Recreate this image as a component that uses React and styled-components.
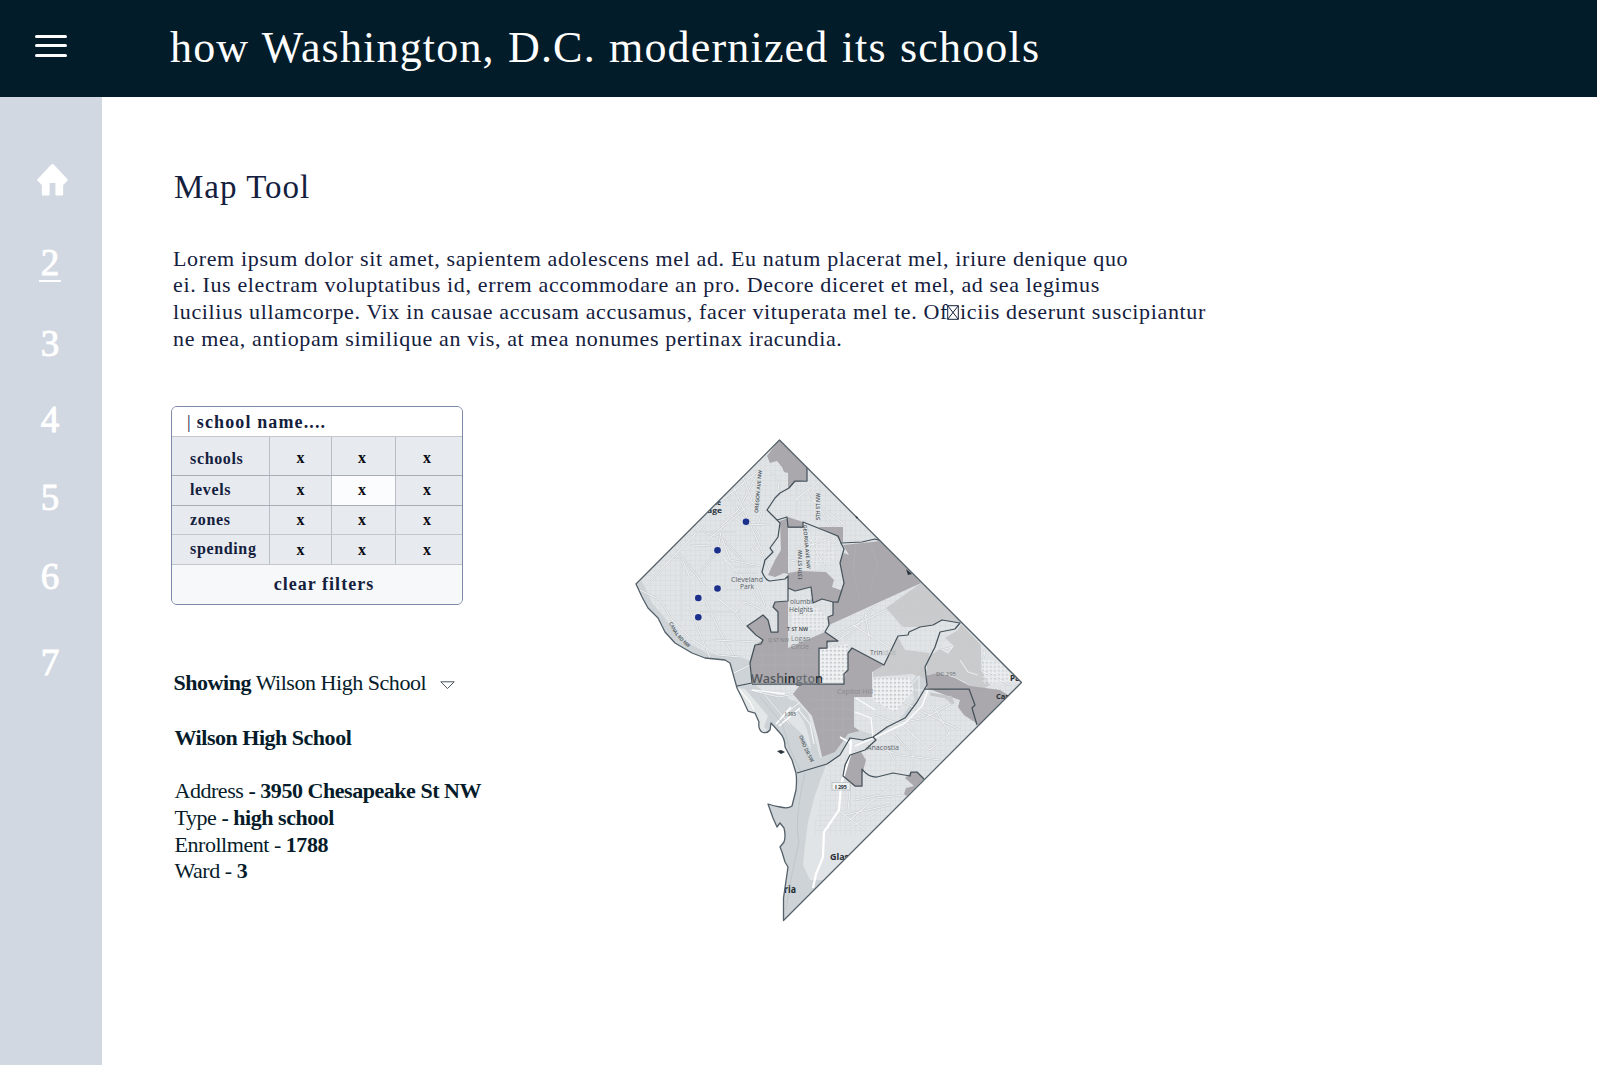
import React from 'react';
import styled, { createGlobalStyle } from 'styled-components';

const GlobalStyle = createGlobalStyle`
  *, *::before, *::after { box-sizing: border-box; }
  body { margin: 0; background: #fff; font-family: "Liberation Serif", "Times New Roman", serif; }
`;

const Page = styled.div`
  display: flex;
  flex-direction: column;
  height: 1065px;
  overflow: hidden;
`;

const Header = styled.header`
  display: flex;
  height: 97px;
  flex: none;
  background: #031c29;
  color: #fff;
`;

const MenuButton = styled.button`
  display: flex;
  flex-direction: column;
  gap: 6.4px;
  width: 135px;
  padding: 35px 0 0 35px;
  border: 0;
  background: none;
`;

const MenuBar = styled.span`
  width: 32px;
  height: 3px;
  border-radius: 2px;
  background: #fff;
`;

const SiteTitle = styled.h1`
  margin: 0 0 0 35px;
  font-size: 44px;
  font-weight: 400;
  line-height: 95px;
  letter-spacing: 1.18px;
  word-spacing: 1px;
  white-space: nowrap;
`;

const Body = styled.div`
  display: flex;
  flex: 1;
`;

const Sidebar = styled.nav`
  display: flex;
  flex-direction: column;
  align-items: center;
  width: 102px;
  flex: none;
  padding: 67px 2px 0 0;
  background: #d1d8e2;
`;

const HomeIcon = styled.svg`
  width: 31px;
  height: 32px;
  margin-left: 5px;
  flex: none;
`;

const NavItem = styled.a`
  height: 38px;
  margin-top: ${(p) => p.$gap}px;
  color: #fff;
  font-size: 37px;
  line-height: 38px;
  -webkit-text-stroke: 0.9px #fff;
  border-bottom: ${(p) => (p.$active ? '2px solid #fff' : '0')};
  padding: 0 1.5px;
`;

const Main = styled.main`
  display: flex;
  flex-direction: column;
  flex: 1;
  padding: 70px 0 0 69px;
`;

const Heading = styled.h2`
  margin: 0 0 0 3px;
  color: #14203d;
  font-size: 33px;
  font-weight: 400;
  line-height: 40px;
  letter-spacing: 1px;
`;

const Intro = styled.p`
  margin: 38.5px 0 0 2px;
  color: #14203d;
  font-size: 22px;
  line-height: 26.75px;
  letter-spacing: 0.645px;
  white-space: nowrap;
`;

const Line = styled.span`
  display: block;
`;

const MissingGlyph = styled.svg`
  width: 12px;
  height: 15px;
  margin-left: -1px;
  margin-right: 1px;
  vertical-align: -1px;
`;

const Columns = styled.div`
  display: flex;
  align-items: flex-start;
  margin-top: 53.2px;
`;

const Controls = styled.section`
  width: 459px;
  flex: none;
`;

const FilterCard = styled.div`
  width: 292px;
  height: 199px;
  border: 1.4px solid #7c89a8;
  border-radius: 6px;
  overflow: hidden;
  color: #14203d;
  font-weight: 700;
  background: #e7eaef;
`;

const SearchField = styled.div`
  height: 30px;
  padding-left: 15px;
  border-bottom: 1px solid #c3c7cd;
  background: #fff;
  font-size: 18px;
  line-height: 30px;
  letter-spacing: 1.12px;
`;

const Caret = styled.span`
  font-weight: 400;
  margin-right: -0.5px;
`;

const FilterRow = styled.div`
  display: grid;
  grid-template-columns: 97px 62px 64px 1fr;
  height: ${(p) => p.$height}px;
  border-bottom: 1px solid ${(p) => (p.$strong ? '#a9adb5' : '#c3c7cd')};
`;

const FilterLabel = styled.div`
  padding: ${(p) => p.$top}px 0 0 18px;
  font-size: 16px;
  line-height: 20px;
  letter-spacing: 0.65px;
`;

const FilterCell = styled.div`
  padding: ${(p) => p.$top}px ${(p) => p.$right}px 0 0;
  border-left: 1px solid #b9bdc5;
  background: ${(p) => (p.$selected ? '#fbfcfe' : 'transparent')};
  color: #0a0c12;
  font-size: 16px;
  line-height: 20px;
  text-align: center;
`;

const ClearButton = styled.button`
  display: block;
  width: 100%;
  height: 39px;
  padding: 0 0 0 14px;
  border: 0;
  background: #f6f8fa;
  color: inherit;
  font: inherit;
  font-size: 18px;
  letter-spacing: 1.03px;
`;

const Details = styled.div`
  margin: 65.5px 0 0 3.5px;
  color: #061c2a;
  font-size: 22px;
  line-height: 26.6px;
  letter-spacing: -0.46px;
  white-space: nowrap;
`;

const Showing = styled.div`
  display: flex;
  align-items: center;
  gap: 14px;
  margin-left: -1px;
`;

const Triangle = styled.svg`
  width: 15px;
  height: 9px;
  margin-top: 4px;
`;

const SchoolName = styled.h3`
  margin: 28px 0 27px;
  font-size: inherit;
  letter-spacing: -0.48px;
`;

const Fact = styled.div``;

const MapSvg = styled.svg`
  width: 400px;
  height: 490px;
  margin-top: 29px;
  font-family: "Open Sans", "Noto Sans", sans-serif;
`;

const NAV = [
  { label: '2', gap: 48, active: true },
  { label: '3', gap: 43 },
  { label: '4', gap: 38 },
  { label: '5', gap: 39.5 },
  { label: '6', gap: 41 },
  { label: '7', gap: 48 },
];

const FILTERS = [
  { label: 'schools', height: 39, labelTop: 12, top: 11, strong: true },
  { label: 'levels', height: 30, labelTop: 4, top: 4, strong: true, selected: 1 },
  { label: 'zones', height: 29, labelTop: 4, top: 4 },
  { label: 'spending', height: 30, labelTop: 4, top: 5 },
];

const OUTLINE =
  'M779.5 440L1021.5 682.5L783.5 920.5V898L788 867L785 862L782 852L780 847L784 842Q786 836 784 828L780 823L777 827L773 818L768 804Q774 806 780 807Q788 809 792 806L796 790Q797 780 796 773L792 760L785 747Q785 738 780 733L771 723L770 730Q767 734 762 732Q758 729 759 722L755 713L748 711L742 698L737 688L730 663L725 660L705 658L692 653L675 643L665 632L658 618L648 608L642 597L636 584Z';

const WATER = [
  'M636 584L642 581L652 603L664 617L675 632L690 644L707 653L724 656L735 655L751 661L753 683L763 691L780 696L797 702L808 714L814 734L820 758L836 751L846 735L861 731L878 736L900 719L914 700L912 682L921 668L927 670L927 685L917 702L905 718L887 727L873 737L863 741L851 738L840 755L826 765L815 795L808 822L805 845L803 865L810 880L824 880L783 921L760 850L750 800L790 770L770 733L730 690L724 663L690 660L650 620Z',
];

const ROADS = [
  'M648 585L660 570L672 558L682 558L690 578L700 572L718 550L722 525L738 510L757 475L764 468',
  'M677 551L698 577L707 590L735 612L744 626L752 634',
  'M701 525L707 533L722 538L742 560L755 580L765 605',
  'M722 490L748 520L760 535L752 550L770 560',
  'M716 505L760 470M733 485L770 570M707 540L755 500M690 580L690 610L710 658M705 600L718 628L733 655M682 560L682 620M672 558L702 527',
  'M640 590L660 600L672 620L690 638L718 655L740 657',
  'M718 552L748 583L768 613M725 555L725 590L745 590M750 500L762 512L758 525',
  'M695 532H735M690 545L712 546M735 567H755M733 573H758M700 612H740M712 640L760 642M735 612L745 602L762 610',
  'M730 515L745 525L770 524M722 538L730 560L760 566M740 470L752 500M770 470L778 480L779 492',
  'M795 500L822 479M808 490L840 540M797 480V515M812 500L845 525M820 482L820 520',
  'M805 525L820 560L840 535M790 560L815 564M820 560L828 572M795 550L832 538M810 530V575',
  'M825 640L890 608L905 630M845 640L873 608M865 612L870 642M853 625L894 650M890 608L940 612M826 650L845 635M900 600L930 592M905 600L920 600',
  'M940 650L985 640M935 665L965 635L985 655M955 660L1000 690M970 665L1010 685M985 650L980 680',
  'M890 725L925 718L958 700M875 715L902 725L930 750L950 733M903 702L960 730M895 735L912 755M913 725V770M870 745L900 755L940 760M930 700L950 735M885 745L900 770',
  'M850 820L875 798L905 795M845 830L880 810M845 815L890 805M855 800L880 795L900 780M838 810L865 830M850 790L848 810',
  'M730 675L750 665M750 690L779 697L800 693M765 695L790 725M783 716L800 702',
];

const DARK = [
  'M779 440L767 456L770 463L777 461L782 467L784 472L788 473V489L795 482L807 480V467Z',
  'M780 521L788 518V574L784 573L775 577L768 575L775 560L781 550Z',
  'M788 517L803 522V528H788ZM818 527H843V543L836 536Z',
  'M788 573L800 571L826 572L834 580L832 587L843 591L838 602H833L822 599L813 603L811 587L795 591L788 588Z',
  'M843 545L862 543L881 541L921 583L829 625V617L833 614V603L838 602L844 583L840 563L844 553L849 555Z',
  'M788 601L775 602L773 607L778 612V632H771L768 620L763 615L747 626L763 640L755 645L750 663L752 683L819 684V649L827 648V643L838 641L825 632L788 648Z',
  'M852 648L884 665L872 672V697H854V727L860 731L848 734L835 752L822 757L818 738L812 716L793 694L800 685L844 684V674L848 670V653Z',
  'M927 675L940 673L955 678L970 686L1000 690L1008 695L979 725L964 715L958 707L960 700L945 695L927 688Z',
  'M850 755L861 752L866 760L862 775V786H855L843 776L845 765Z',
  'M905 778L911 772H917L924 779L907 796L904 794L906 788L914 786Z',
];

const MID = [
  'M921 583L961 623L942 620L933 625L920 627H903L886 608Z',
  'M884 665L898 637L905 650L930 653L925 667L925 678L912 674L873 677V671Z',
  'M961 624L981 645V670L990 685L978 692L965 682L948 674H927V658L940 649L948 654L954 646L945 638L958 630Z',
];

const BORDERS = [
  'M807 466V481H795L789 488L780 493L775 498L767 510L777 520L780 523L778 537L770 548L773 552L765 560L762 572Q766 581 770 581L785 579L788 576V601L775 602L773 607L778 612V632H771L768 620L763 615L756 620L747 626L756 635L763 640L761 644L755 645L750 663L752 683L737 686',
  'M777 520L787 517L788 527H803V522L838 536L841 543L862 542L875 539L881 541',
  'M841 543L844 549L840 563L844 583L838 602H833L822 599L813 603L811 587L795 591L788 588',
  'M833 602V615L828 617L829 625L825 632L838 641H827V648H819V684',
  'M752 684H844V674L848 670V653L852 648L884 665L898 636L908 635L909 632L920 627L933 625L942 620L960 623L955 629L940 632L935 647L925 667L927 685L917 702L905 718L887 727L873 737L863 740L850 738L840 755L827 764L797 773',
  'M925 689H969L975 705L972 708L977 725',
  'M873 737L876 740L865 750L850 755L845 765L843 776L855 786H862V769Q868 777 877 777L893 773L910 776L911 772H917L924 779',
];

const SCHOOLS = [[746, 521.7], [717.5, 550.3], [717.5, 588.5], [698.3, 598], [698.3, 617.2]];

const LABELS = [
  { t: [['Wash', '#55595e'], ['in', '#1f292e'], ['gto', '#6b7075'], ['n', '#1f292e']], x: 751, y: 683, s: 12.5, w: 72, b: 600 },
  { t: [['Cleveland']], x: 731, y: 582, s: 6.8, w: 32 },
  { t: [['Park']], x: 740, y: 589, s: 6.8, w: 14 },
  { t: [['olumbi']], x: 790, y: 604, s: 6.8, w: 22 },
  { t: [['Heights']], x: 789, y: 612, s: 6.8, w: 24 },
  { t: [['Logan']], x: 791, y: 641, s: 6.5, w: 19, c: '#747b80' },
  { t: [['Circle']], x: 791, y: 649, s: 6.5, w: 18, c: '#85898d' },
  { t: [['T ST NW']], x: 787, y: 631, s: 5, w: 21, c: '#30383d', b: 600 },
  { t: [['Q ST NW']], x: 768, y: 642, s: 5, w: 21, c: '#7e8186' },
  { t: [['Trin', '#596268'], ['idad', '#b2b5b7']], x: 870, y: 655, s: 6.8, w: 26 },
  { t: [['Capitol Hill']], x: 837, y: 694, s: 6.5, w: 36, c: '#898b90' },
  { t: [['Anacostia']], x: 867, y: 750, s: 6.8, w: 32 },
  { t: [['DC 295']], x: 936, y: 676, s: 5, w: 20, c: '#6d7479' },
  { t: [['I 395']], x: 785, y: 716, s: 4.8, w: 11, b: 600 },
  { t: [['Glassmanor']], x: 830, y: 860, s: 9.3, w: 53, c: '#242d32', b: 700 },
  { t: [['ria']], x: 784, y: 893, s: 9.8, w: 12, c: '#242d32', b: 700 },
  { t: [['age']], x: 707, y: 513, s: 7, w: 15, c: '#242d32', b: 700 },
  { t: [['le']], x: 715, y: 505, s: 7, w: 6, c: '#242d32', b: 700 },
  { t: [['Pa']], x: 1010, y: 681, s: 8, w: 10, c: '#242d32', b: 700 },
  { t: [['Cap']], x: 996, y: 699, s: 7, w: 14, c: '#242d32', b: 700 },
];

const STREETS = [
  { t: 'OREGON AVE NW', d: 'M758 513L762 469', w: 43 },
  { t: '5TH ST NW', d: 'M820 520V492', w: 27 },
  { t: '13TH ST NW', d: 'M802 580V549', w: 30 },
  { t: 'GEORGIA AVE NW', d: 'M803 525L807 570', w: 44 },
  { t: 'CANAL RD NW', d: 'M669 623Q676 640 692 650', w: 32 },
  { t: 'OHIO DR SW', d: 'M799 736Q804 751 812 764', w: 29 },
];

function WardMap() {
  return (
    <MapSvg viewBox="630 435 400 490" role="img" aria-label="Washington, D.C. map">
      <defs>
        <clipPath id="district"><path d={OUTLINE} /></clipPath>
        <pattern id="blocks" width="5" height="5" patternUnits="userSpaceOnUse">
          <path d="M0 .5H5M.5 0V5" stroke="#cfd4d7" strokeWidth=".55" fill="none" opacity=".55" />
        </pattern>
        <pattern id="downtown" width="4" height="4" patternUnits="userSpaceOnUse">
          <path d="M0 1H4M1 0V4" stroke="#f8f9f9" strokeWidth=".9" fill="none" />
          <path d="M2.4 2.4H3.6M2.8 2V3.6" stroke="#b4b9bc" strokeWidth=".6" fill="none" />
        </pattern>
      </defs>
      <g clipPath="url(#district)">
        <rect x="630" y="435" width="400" height="490" fill="#e1e4e6" />
        <path d="M636 584L779 440L960 623L925 667L915 700L1021 682L870 835H812L828 765L875 738L850 730L752 684L680 640Z" fill="url(#blocks)" />
        {WATER.map((d) => <path key={d} d={d} fill="#cdd3d6" />)}
        <path d="M737 688L745 689L758 704L768 716L762 732L753 724L742 700Z" fill="#e4e7e8" />
        <path d="M786 719L797 712Q809 725 811 751L803 735Z" fill="#e1e4e6" />
        <path d="M774 699L785 694L791 702L786 711Z" fill="#cdd3d6" />
        <g fill="none" strokeLinejoin="round">
          {ROADS.map((d) => (
            <g key={d}>
              <path d={d} stroke="#bcc2c6" strokeWidth="2" opacity=".75" />
              <path d={d} stroke="#eef0f1" strokeWidth="1.1" />
            </g>
          ))}
        </g>
        {MID.map((d) => <path key={d} d={d} fill="#c6c8c9" opacity=".9" />)}
        {DARK.map((d) => <path key={d} d={d} fill="#a8a6aa" opacity=".96" />)}
        <path d="M810 700H852M812 709H853M816 719H853M820 730H852M823 690V745M833 690V750M843 688V735M757 655H815M756 665H817M762 645V680M775 640V680M788 650V682M803 645V682M856 545L853 570L860 600M870 543L878 565L870 590" stroke="#b6b5b8" strokeWidth=".6" fill="none" opacity=".7" />
        <path d="M930 694L946 697L953 703L950 696" stroke="#c5c7c9" strokeWidth="3" fill="none" />
        <g fill="url(#downtown)">
          <path d="M820 650L848 644V668L843 682H820Z" />
          <path d="M873 678H910L914 690L895 712L873 700Z" />
          <path d="M792 606L812 604L828 618L824 631H792Z" opacity=".6" />
          <path d="M805 533L835 540V560L805 571Z" opacity=".3" />
          <path d="M982 658L1000 663L1016 681L982 684Z" opacity=".6" />
        </g>
        <g fill="none" strokeLinejoin="round">
          <g stroke="#fff">
            <path d="M813 888L816 874L823 857L824 832L839 810L841 785L850 755L851 740" strokeWidth="2.2" />
            <path d="M855 746L880 735L905 723L922 706L928 690" strokeWidth="1.6" opacity=".85" />
            <path d="M776 724L791 707M779 726L800 708M840 737L852 744" strokeWidth="1.6" />
            <path d="M752 690L785 694M855 712L871 718L873 738M856 698L875 710" strokeWidth="1.3" opacity=".9" />
            <path d="M738 688L750 702L754 710M798 709L810 724L814 744" strokeWidth="1.2" opacity=".8" />
            <path d="M915 690H927M912 684L919 676L919 700" strokeWidth="1.1" opacity=".6" />
            <path d="M960 660L968 672L978 675" strokeWidth="1.2" opacity=".6" />
          </g>
          <path d="M805 773Q794 820 799 842Q790 880 786 910M760 697L782 723L790 749L801 772" stroke="#bac2c6" strokeWidth=".7" />
        </g>
        <g fill="none" stroke="#45525b" strokeWidth="1.25" strokeLinejoin="round">
          {BORDERS.map((d) => <path key={d} d={d} />)}
        </g>
        <rect x="832" y="782.5" width="18" height="7.5" fill="#f0f2f2" stroke="#a6acb0" strokeWidth=".6" />
        <text x="835" y="788.5" fontSize="5.5" fontWeight="700" fill="#30383d" textLength="12">I 295</text>
        {LABELS.map((l) => (
          <text key={`${l.x}-${l.y}`} x={l.x} y={l.y} fontSize={l.s} fontWeight={l.b || 400} fill={l.c || '#596268'} textLength={l.w} lengthAdjust="spacingAndGlyphs">
            {l.t.map(([part, color]) => (color ? <tspan key={part} fill={color}>{part}</tspan> : part))}
          </text>
        ))}
        {STREETS.map((s, i) => (
          <g key={s.t}>
            <path id={`street-${i}`} d={s.d} fill="none" />
            <text fontSize="5" fontWeight="600" fill="#475056">
              <textPath href={`#street-${i}`} textLength={s.w} lengthAdjust="spacingAndGlyphs">{s.t}</textPath>
            </text>
          </g>
        ))}
      </g>
      <path d={OUTLINE} fill="none" stroke="#55616a" strokeWidth="1.3" strokeLinejoin="round" />
      <path d="M777 751L781 750L785 752L781 754ZM906 569L912 574L908 575ZM855 516L858 517L857 519Z" fill="#28343b" />
      {SCHOOLS.map(([x, y]) => <circle key={`${x}-${y}`} cx={x} cy={y} r="3.3" fill="#1b2f8c" />)}
    </MapSvg>
  );
}

export default function App() {
  return (
    <Page>
      <GlobalStyle />
      <Header>
        <MenuButton aria-label="Menu"><MenuBar /><MenuBar /><MenuBar /></MenuButton>
        <SiteTitle>how Washington, D.C. modernized its schools</SiteTitle>
      </Header>
      <Body>
        <Sidebar>
          <HomeIcon viewBox="0 0 32 32" preserveAspectRatio="none">
            <path d="M14.8.6Q16-.4 17.2.6L31.6 15.2Q32 16 31.4 16.7L27 21V30.5Q27 31.6 26 31.6H20Q19 31.6 19 30.5V19H13V30.5Q13 31.6 12 31.6H6Q5 31.6 5 30.5V21L.6 16.7Q0 16 .4 15.2Z" fill="#fff" />
          </HomeIcon>
          {NAV.map((n) => <NavItem key={n.label} $gap={n.gap} $active={n.active}>{n.label}</NavItem>)}
        </Sidebar>
        <Main>
          <Heading>Map Tool</Heading>
          <Intro>
            <Line>Lorem ipsum dolor sit amet, sapientem adolescens mel ad. Eu natum placerat mel, iriure denique quo</Line>
            <Line>ei. Ius electram voluptatibus id, errem accommodare an pro. Decore diceret et mel, ad sea legimus</Line>
            <Line>
              lucilius ullamcorpe. Vix in causae accusam accusamus, facer vituperata mel te. Of
              <MissingGlyph viewBox="0 0 12 15"><path d="M.7.7H11.3V14.3H.7ZM.7.7L11.3 14.3M11.3.7L.7 14.3" fill="none" stroke="#14203d" /></MissingGlyph>
              iciis deserunt suscipiantur
            </Line>
            <Line>ne mea, antiopam similique an vis, at mea nonumes pertinax iracundia.</Line>
          </Intro>
          <Columns>
            <Controls>
              <FilterCard>
                <SearchField><Caret>|</Caret> school name....</SearchField>
                {FILTERS.map((f) => (
                  <FilterRow key={f.label} $height={f.height} $strong={f.strong}>
                    <FilterLabel $top={f.labelTop}>{f.label}</FilterLabel>
                    {[0, 3, 4].map((right, i) => (
                      <FilterCell key={i} $top={f.top} $right={right} $selected={f.selected === i}>x</FilterCell>
                    ))}
                  </FilterRow>
                ))}
                <ClearButton>clear filters</ClearButton>
              </FilterCard>
              <Details>
                <Showing>
                  <span><b>Showing</b> Wilson High School</span>
                  <Triangle viewBox="0 0 15 9"><path d="M.8.8H14.2L7.5 7.6Z" fill="none" stroke="#34434e" strokeWidth=".9" /></Triangle>
                </Showing>
                <SchoolName>Wilson High School</SchoolName>
                <Fact>Address <b>- 3950 Chesapeake St NW</b></Fact>
                <Fact>Type <b>- high school</b></Fact>
                <Fact>Enrollment - <b>1788</b></Fact>
                <Fact>Ward - <b>3</b></Fact>
              </Details>
            </Controls>
            <WardMap />
          </Columns>
        </Main>
      </Body>
    </Page>
  );
}
